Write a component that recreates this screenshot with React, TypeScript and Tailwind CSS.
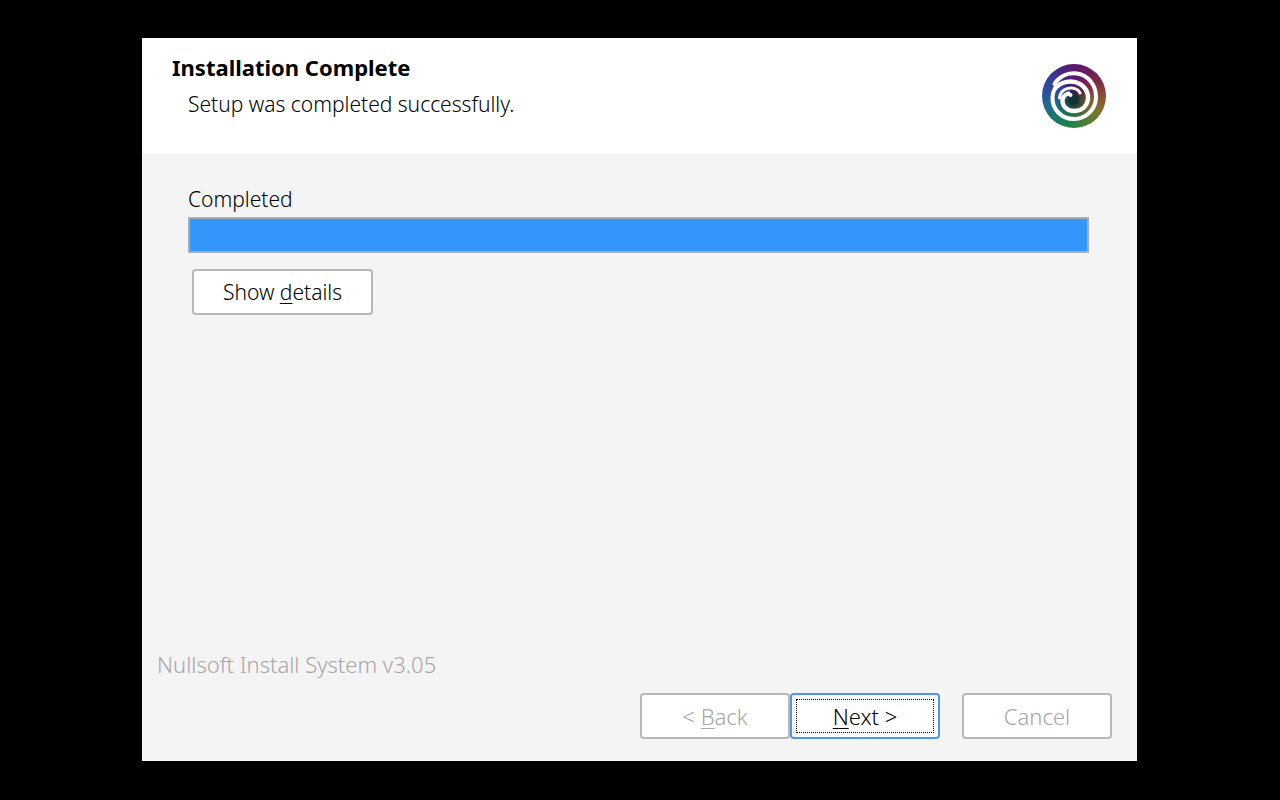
import type { ButtonHTMLAttributes } from 'react';

function DialogButton({ className = '', children, ...rest }: ButtonHTMLAttributes<HTMLButtonElement>) {
  return (
    <button
      type="button"
      className={`flex h-[46px] items-center justify-center rounded-sm border-2 bg-white ${className}`}
      {...rest}
    >
      {children}
    </button>
  );
}

function Mnemonic({ children }: { children: string }) {
  return <span className="underline decoration-1 underline-offset-[3px]">{children}</span>;
}

function Logo() {
  return (
    <div className="size-16 rounded-full bg-[conic-gradient(from_0deg,#5c1a6c,#6e1c5c_30deg,#7a2c40_60deg,#8c5434_95deg,#7c7430_125deg,#507c34_155deg,#248048_185deg,#1a7868_220deg,#1f6a90_250deg,#2a509c_275deg,#34409c_305deg,#48247c_335deg,#5c1a6c)]">
      <svg viewBox="0 0 64 64" className="size-16" role="img" aria-label="Ubisoft">
        <defs>
          <radialGradient id="core">
            <stop offset="0" stopColor="#0c2c2c" stopOpacity="0.9" />
            <stop offset="1" stopColor="#2b1438" stopOpacity="0" />
          </radialGradient>
        </defs>
        <circle cx="32" cy="36" r="18" fill="url(#core)" />
        <g fill="none" stroke="#fff" strokeLinecap="round" strokeLinejoin="round">
          <path strokeWidth="4" d="M12.5 20C18 11.500 27 8.500 35 9.500C46 11 54 21 54 33C54 45.500 44 55 32 55C19 55 10 45 10.500 33C10.700 29 11.500 27 13 24.500" />
          <path strokeWidth="4.4" d="M13 24.500C19 17.500 30 15.500 38 20C44 23.500 46.500 29 46 35C45 43 39 47 32 47C25 47 20.500 42 20.500 37C20.500 33 23 30.500 26.500 29.500" />
          <path strokeWidth="3" d="M17.500 34C18 27 24 23.500 30 24C34 24.500 37 26.500 38 29" />
        </g>
        <circle cx="32" cy="36" r="5.500" fill="#0f3433" />
        <circle cx="28.500" cy="31" r="2" fill="#fff" />
      </svg>
    </div>
  );
}

export default function App() {
  return (
    <div className="flex min-h-screen bg-black pt-[38px] pr-[143px] pb-[39px] pl-[142px] font-['Noto_Sans',sans-serif] text-[22px] leading-7 font-light text-black">
      <main className="flex flex-1 flex-col bg-[#f4f4f4]">
        <header className="flex h-[115px] items-start justify-between bg-white pr-[31px] pl-[30px]">
          <div className="pt-[15px]">
            <h1 className="font-bold">Installation Complete</h1>
            <p className="mt-[9px] pl-4 text-[21px] leading-7">Setup was completed successfully.</p>
          </div>
          <div className="pt-[26px]"><Logo /></div>
        </header>
        <section className="flex-1 pt-8 pr-12 pl-[46px]">
          <p id="status" className="text-[21px] leading-7">Completed</p>
          <div
            role="progressbar"
            aria-labelledby="status"
            aria-valuenow={100}
            className="mt-1 h-9 border-2 border-[#a9adb2] bg-[#3296fa]"
          />
          <DialogButton className="mt-4 ml-1 w-[181px] border-[#b8b8b8] text-[21px]">
            <span>Show <Mnemonic>d</Mnemonic>etails</span>
          </DialogButton>
        </section>
        <footer className="pr-[25px] pb-[22px] pl-[15px] text-[#a6a6a6]">
          <p>Nullsoft Install System v3.05</p>
          <div className="mt-[15px] flex justify-end">
            <DialogButton disabled className="w-[150px] border-[#b8b8b8]">
              <span>&lt; <Mnemonic>B</Mnemonic>ack</span>
            </DialogButton>
            <DialogButton className="relative w-[150px] border-[#4c96f0] text-black">
              <span className="absolute inset-1 border border-dotted border-black" />
              <span><Mnemonic>N</Mnemonic>ext &gt;</span>
            </DialogButton>
            <DialogButton disabled className="ml-[22px] w-[150px] border-[#b8b8b8]">Cancel</DialogButton>
          </div>
        </footer>
      </main>
    </div>
  );
}
